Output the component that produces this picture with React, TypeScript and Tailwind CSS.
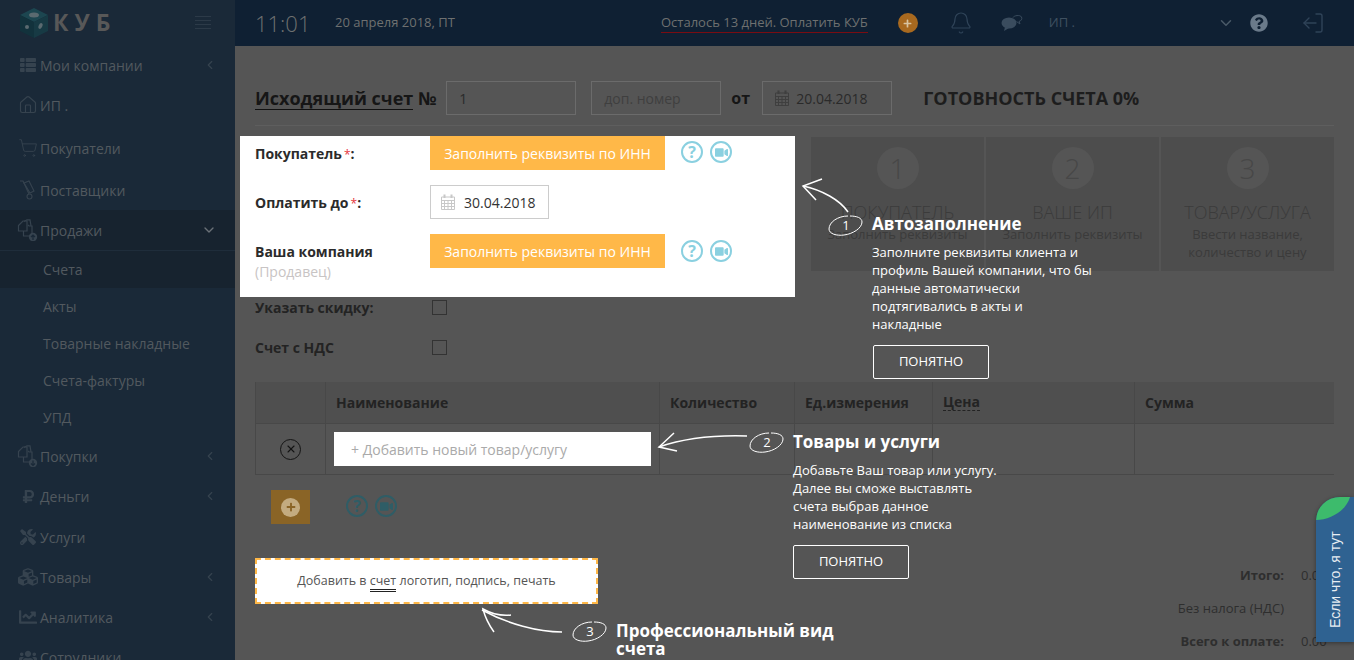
import React from 'react';
import { Bell, ChevronDown, ChevronLeft, Home, LogOut, ShoppingCart, X } from 'lucide-react';
import { FaChartLine, FaCubes, FaThList, FaQuestionCircle, FaRubleSign, FaTools, FaUsers, FaVideo, FaPlus } from 'react-icons/fa';

function DocsIcon({ up }: { up: boolean }) {
  return (
    <svg width="22" height="22" viewBox="0 0 22 22" fill="none" stroke="currentColor" strokeWidth="1.2">
      <path d="M1.5 6.5 6 2h4v10H1.5z" />
      <path d="M6.5 12v5H15V7h-3l-1-1" />
      <path d="M7 2.5 10 0.8h3l1 6" />
      <circle cx="16" cy="18" r="4.2" fill="currentColor" stroke="none" />
      <path d={up ? 'M16 21v-5M14 18l2-2 2 2' : 'M16 15.5v5M14 18.500l2 2 2-2'} stroke="#1a2938" strokeWidth="1.2" />
    </svg>
  );
}

function DollyIcon() {
  return (
    <svg width="18" height="20" viewBox="0 0 18 20" fill="none" stroke="currentColor" strokeWidth="1.1">
      <path d="M1 1h3l6 13" />
      <path d="M5 3l5-2 5 10-4 2z" />
      <circle cx="10.500" cy="16.500" r="2.500" />
    </svg>
  );
}

function CalendarIcon({ color }: { color: string }) {
  return (
    <svg width="14" height="16" viewBox="0 0 14 16" fill="none" stroke={color} strokeWidth="1" className="shrink-0">
      <path d="M0.5 3h13v12.500h-13zM0.500 6.500h13M0.500 9.500h13M0.500 12.500h13M3.500 6.500v9M7 6.500v9M10.500 6.500v9" />
      <path d="M3.500 0.500v3.500M10.500 0.500v3.500" strokeWidth="2" />
    </svg>
  );
}

function SideItem({ icon, label, arrow, active, down }: { icon: React.ReactNode; label: string; arrow?: boolean; active?: boolean; down?: boolean }) {
  return (
    <div className={`flex h-[40px] items-center pl-[16px] pr-[18px] ${active ? 'bg-[#17232f]' : ''}`}>
      <span className="flex w-[24px] shrink-0 justify-center text-[#36434f]">{icon}</span>
      <span className="flex-1 text-[14px] text-[#52595f]">{label}</span>
      {arrow && <ChevronLeft size={14} className="text-[#36434f]" />}
      {down && <ChevronDown size={16} className="text-[#6a7178]" />}
    </div>
  );
}

function SubItem({ label, active }: { label: string; active?: boolean }) {
  return (
    <div className={`flex h-[37px] items-center pl-[43px] text-[14px] text-[#52595f] ${active ? 'bg-[#17232f]' : ''}`}>{label}</div>
  );
}

function Sidebar() {
  return (
    <aside className="h-[660px] w-[235px] shrink-0 overflow-hidden bg-[#1a2938]">
      <div className="flex h-[45px] items-center pl-[20px] pr-[24px]">
        <svg width="28" height="30" viewBox="0 0 28 30">
          <path d="M14 0 28 7 14 14 0 7z" fill="#1c4650" />
          <path d="M0 7 14 14V30L0 23z" fill="#12323c" />
          <path d="M28 7 14 14V30L28 23z" fill="#173a44" />
          <ellipse cx="14" cy="7" rx="5" ry="2.500" fill="#5a6a70" />
          <circle cx="7" cy="19" r="2" fill="#5a6a70" />
          <ellipse cx="20.500" cy="18" rx="1.800" ry="3" fill="#5a6a70" transform="rotate(25 20.500 18)" />
        </svg>
        <span className="ml-[5px] flex-1 text-[23px] font-bold tracking-[6px] text-[#585858]">КУБ</span>
        <div className="flex w-[16px] flex-col gap-[3px]">
          <span className="h-px bg-[#2c3a48]" />
          <span className="h-px bg-[#2c3a48]" />
          <span className="h-px bg-[#2c3a48]" />
          <span className="h-px bg-[#2c3a48]" />
        </div>
      </div>
      <SideItem icon={<FaThList size={16} />} label="Мои компании" arrow />
      <SideItem icon={<Home size={20} strokeWidth={1.4} />} label="ИП ." />
      <div className="h-[3px]" />
      <SideItem icon={<ShoppingCart size={20} strokeWidth={1.1} />} label="Покупатели" />
      <div className="h-[2px]" />
      <SideItem icon={<DollyIcon />} label="Поставщики" />
      <SideItem icon={<DocsIcon up />} label="Продажи" active down />
      <div className="h-px bg-[#1f2d3b]" />
      <SubItem label="Счета" active />
      <SubItem label="Акты" />
      <SubItem label="Товарные накладные" />
      <SubItem label="Счета-фактуры" />
      <SubItem label="УПД" />
      <SideItem icon={<DocsIcon up={false} />} label="Покупки" arrow />
      <SideItem icon={<FaRubleSign size={15} />} label="Деньги" arrow />
      <div className="h-px" />
      <SideItem icon={<FaTools size={16} />} label="Услуги" />
      <SideItem icon={<FaCubes size={20} />} label="Товары" arrow />
      <SideItem icon={<FaChartLine size={18} />} label="Аналитика" arrow />
      <SideItem icon={<FaUsers size={18} />} label="Сотрудники" />
    </aside>
  );
}

function TopBar() {
  return (
    <header className="flex h-[46px] items-center bg-[#0f2033] pl-[20px] text-[#6e7070]">
      <span className="w-[80px] text-[22px] font-light">11:01</span>
      <span className="w-[326px] text-[13px]">20 апреля 2018, ПТ</span>
      <span className="border-b border-[#7a0c12] pb-[1px] text-[13px] leading-[17px]">Осталось 13 дней. Оплатить КУБ</span>
      <span className="ml-[30px] flex h-[20px] w-[20px] items-center justify-center rounded-full bg-[#a8691f] text-[#d8c3a0]">
        <FaPlus size={9} />
      </span>
      <Bell size={24} strokeWidth={1.2} className="ml-[31px] text-[#2f4358]" />
      <svg width="24" height="20" viewBox="0 0 24 20" className="ml-[27px]" fill="none">
        <ellipse cx="9" cy="10" rx="7.500" ry="5.500" fill="#3a4c5e" />
        <path d="M5 14l-1 4 5-3z" fill="#3a4c5e" />
        <path d="M13 4.500c1-2 7-3 8.500-.5 1 2-.5 4-2.500 4.500l1 2.500-3.500-2.500" stroke="#3a4c5e" />
      </svg>
      <span className="ml-[25px] w-[168px] text-[13px] text-[#3f5060]">ИП .</span>
      <ChevronDown size={18} className="text-[#4a5a68]" />
      <FaQuestionCircle size={18} className="ml-[15px] text-[#6a7a8a]" />
      <LogOut size={24} strokeWidth={1.4} className="ml-[33px] -scale-x-100 text-[#2f4358]" />
    </header>
  );
}

function DimInput({ value, width, muted, calendar }: { value: string; width: string; muted?: boolean; calendar?: boolean }) {
  return (
    <div className={`flex h-[34px] items-center gap-[7px] border border-[#6b6b6b] pl-[12px] text-[14px] ${width} ${muted ? 'text-[#3f3f3f]' : 'text-[#2a2a2a]'}`}>
      {calendar && <CalendarIcon color="#3f3f3f" />}
      {value}
    </div>
  );
}

function HelpIcons({ dim }: { dim?: boolean }) {
  const color = dim ? 'text-[#2f5d66] border-[#2f5d66]' : 'text-[#8ad0e0] border-[#8ad0e0]';
  return (
    <div className={`flex gap-[7px] ${dim ? '' : 'mb-[2px]'}`}>
      <span className={`flex h-[22px] w-[22px] items-center justify-center rounded-full border-2 text-[16px] font-bold ${color}`}>?</span>
      <span className={`flex h-[22px] w-[22px] items-center justify-center rounded-full border-2 ${color}`}>
        <FaVideo size={13} />
      </span>
    </div>
  );
}

function FillButton() {
  return (
    <div className="flex h-[34px] w-[235px] items-center justify-center bg-[#ffb848] text-[14px] text-white">Заполнить реквизиты по ИНН</div>
  );
}

function Required({ label }: { label: string }) {
  return (
    <span className="text-[14px] font-bold text-[#2b2b2b]">
      {label}
      <span className="ml-[2px] text-[12px] font-normal text-[#e5343c]">*</span>:
    </span>
  );
}

function HighlightedFields() {
  return (
    <div className="h-[161px] w-[555px] shrink-0 bg-white pl-[15px]">
      <div className="flex h-[34px] items-center">
        <span className="w-[175px]"><Required label="Покупатель" /></span>
        <FillButton />
        <span className="ml-[16px]"><HelpIcons /></span>
      </div>
      <div className="mt-[15px] flex h-[34px] items-center">
        <span className="w-[175px]"><Required label="Оплатить до" /></span>
        <div className="flex h-[34px] w-[119px] items-center gap-[9px] border border-[#cccccc] pl-[10px] text-[14px] text-[#333]">
          <CalendarIcon color="#c8c8c8" />
          30.04.2018
        </div>
      </div>
      <div className="mt-[15px] flex items-start">
        <div className="w-[175px] pt-[8px]">
          <div className="text-[14px] font-bold leading-[20px] text-[#2b2b2b]">Ваша компания</div>
          <div className="text-[14px] leading-[20px] text-[#c8c4c4]">(Продавец)</div>
        </div>
        <FillButton />
        <span className="ml-[16px] mt-[6px]"><HelpIcons /></span>
      </div>
    </div>
  );
}

function StepCard({ n, title, lines }: { n: string; title: string; lines: string[] }) {
  return (
    <div className="flex h-[134px] w-[173px] flex-col items-center bg-[#4d4d4d] pt-[10px] text-[#3b3b3b]">
      <div className="flex h-[42px] w-[42px] items-center justify-center rounded-full bg-[#555555] text-[28px] font-light text-[#474747]">{n}</div>
      <div className="mt-[10px] text-[18px] font-light leading-[26px]">{title}</div>
      {lines.map((l) => (
        <div key={l} className="text-[13px] leading-[18px]">{l}</div>
      ))}
    </div>
  );
}

function CheckRow({ label }: { label: string }) {
  return (
    <div className="flex h-[15px] items-center">
      <span className="w-[177px] text-[14px] font-bold text-[#232323]">{label}</span>
      <span className="h-[15px] w-[15px] border border-[#333333]" />
    </div>
  );
}

function ItemsTable() {
  const head = 'flex items-center border-l border-[#484848] pl-[10px] text-[14px] font-bold text-[#232323]';
  return (
    <div className="mt-[27px] grid grid-cols-[70px_334px_135px_138px_202px_200px] grid-rows-[41px_51px] border-b border-[#484848]">
      <div className="border-l border-[#484848] bg-[#4f4f4f]" />
      <div className={`${head} bg-[#4f4f4f]`}>Наименование</div>
      <div className={`${head} bg-[#4f4f4f]`}>Количество</div>
      <div className={`${head} bg-[#4f4f4f]`}>Ед.измерения</div>
      <div className={`${head} bg-[#4f4f4f]`}>
        <span className="border-b border-dashed border-[#232323] leading-[16px]">Цена</span>
      </div>
      <div className={`${head} bg-[#4f4f4f]`}>Сумма</div>
      <div className="flex items-center justify-center border-l border-t border-[#484848]">
        <span className="flex h-[21px] w-[21px] items-center justify-center rounded-full border-[1.5px] border-[#141414] text-[#141414]"><X size={12} strokeWidth={2.2} /></span>
      </div>
      <div className="flex items-center border-l border-t border-[#484848] pl-[8px]">
        <div className="flex h-[34px] w-[317px] items-center bg-white pl-[17px] text-[14px] text-[#aaaaaa]">+ Добавить новый товар/услугу</div>
      </div>
      <div className="border-l border-t border-[#484848]" />
      <div className="border-l border-t border-[#484848]" />
      <div className="border-l border-t border-[#484848]" />
      <div className="border-l border-t border-[#484848]" />
    </div>
  );
}

function Totals() {
  const row = 'flex h-[33px] items-center';
  const label = 'flex w-[100px] justify-end whitespace-nowrap';
  return (
    <div className="mt-[1px] w-[150px] shrink-0 text-[13px] text-[#2e2e2e]">
      <div className={row}><span className={`${label} font-bold`}>Итого:</span><span className="ml-[17px]">0.00</span></div>
      <div className={row}><span className={label}>Без налога (НДС)</span></div>
      <div className={row}><span className={`${label} font-bold`}>Всего к оплате:</span><span className="ml-[17px]">0.00</span></div>
    </div>
  );
}

function Scribble({ n }: { n: string }) {
  return (
    <div className="relative flex h-[24px] w-[36px] items-center justify-center text-[13px] text-white">
      <svg width="36" height="24" viewBox="0 0 36 24" fill="none" stroke="#ffffff" strokeWidth="1" className="absolute inset-0">
        <path d="M20 2C10 2 1 8 1 15c0 5 8 7 15 6 9-1 18-7 18-13 0-4-5-6-12-6" />
      </svg>
      <span className="relative">{n}</span>
    </div>
  );
}

function GotItButton() {
  return (
    <div className="flex h-[34px] w-[116px] items-center justify-center rounded-[2px] border border-white text-[13px] text-white">ПОНЯТНО</div>
  );
}

function Hint({ title, lines, className, buttonClass }: { title: string; lines: string[]; className: string; buttonClass: string }) {
  return (
    <div className={`absolute ${className}`}>
      <div className="text-[17px] font-bold leading-[20px] text-white">{title}</div>
      <div className="mt-[9px] text-[13px] leading-[18px] whitespace-nowrap text-white">
        {lines.map((l) => (
          <div key={l}>{l}</div>
        ))}
      </div>
      <div className={buttonClass}><GotItButton /></div>
    </div>
  );
}

function Hints() {
  return (
    <>
      <svg width="60" height="40" viewBox="0 0 60 40" fill="none" stroke="#ffffff" strokeWidth="1.5" className="absolute left-[798px] top-[178px]">
        <path d="M50 34C42 22 24 12 5 8" />
        <path d="M24 1 5 8l13 14" />
      </svg>
      <div className="absolute left-[828px] top-[214px]"><Scribble n="1" /></div>
      <Hint
        className="left-[872px] top-[214px]"
        buttonClass="ml-[1px] mt-[12px]"
        title="Автозаполнение"
        lines={['Заполните реквизиты клиента и', 'профиль Вашей компании, что бы', 'данные автоматически', 'подтягивались в акты и', 'накладные']}
      />

      <svg width="96" height="26" viewBox="0 0 96 26" fill="none" stroke="#ffffff" strokeWidth="1.5" className="absolute left-[655px] top-[430px]">
        <path d="M92 6C60 5 30 8 4 17" />
        <path d="M19 3 4 17l18 4" />
      </svg>
      <div className="absolute left-[749px] top-[431px]"><Scribble n="2" /></div>
      <Hint
        className="left-[793px] top-[432px]"
        buttonClass="mt-[12px]"
        title="Товары и услуги"
        lines={['Добавьте Ваш товар или услугу.', 'Далее вы сможе выставлять', 'счета выбрав данное', 'наименование из списка']}
      />

      <svg width="88" height="34" viewBox="0 0 88 34" fill="none" stroke="#ffffff" strokeWidth="1.5" className="absolute left-[478px] top-[604px]">
        <path d="M84 28C60 28 30 20 4 6" />
        <path d="M33 11C24 12 14 10 5 5c2 8 6 16 11 23" />
      </svg>
      <div className="absolute left-[572px] top-[620px]"><Scribble n="3" /></div>
      <div className="absolute left-[616px] top-[622px] w-[240px] text-[17px] font-bold leading-[18px] text-white">Профессиональный вид счета</div>
    </>
  );
}

function HelpWidget() {
  return (
    <div className="absolute right-0 top-[497px] h-[145px] w-[38px] overflow-hidden rounded-tl-[24px] bg-[#2f6291] shadow-[0_1px_4px_rgba(0,0,0,0.4)]">
      <svg width="38" height="24" viewBox="0 0 38 24" className="absolute left-0 top-0">
        <path d="M0 23C14 23 30 14 34 0H20C8 0 0 10 0 23z" fill="#3dbb6c" />
      </svg>
      <div className="absolute bottom-[14px] left-[10px] origin-bottom-left translate-x-[18px] -rotate-90 whitespace-nowrap font-['Liberation_Sans'] text-[14px] leading-[18px] text-[#e9eef3]">Если что, я тут</div>
    </div>
  );
}

export default function App() {
  return (
    <div className="relative flex h-[660px] w-[1354px] overflow-hidden bg-[#555555] font-['Open_Sans',sans-serif]">
      <Sidebar />
      <main className="min-w-0 flex-1">
        <TopBar />
        <div className="mt-[35px] flex h-[34px] items-center pl-[20px]">
          <span className="border-b border-[#111] text-[18px] font-bold leading-[22px] text-[#161616]">Исходящий счет</span>
          <span className="ml-[5px] w-[28px] text-[18px] font-bold text-[#161616]">№</span>
          <DimInput value="1" width="w-[130px]" />
          <span className="ml-[15px]"><DimInput value="доп. номер" width="w-[130px]" muted /></span>
          <span className="ml-[10px] w-[31px] text-[16px] font-bold text-[#161616]">от</span>
          <DimInput value="20.04.2018" width="w-[130px]" calendar />
          <span className="ml-[31px] text-[18px] font-bold text-[#1d1d1d]">ГОТОВНОСТЬ СЧЕТА 0%</span>
        </div>
        <div className="ml-[20px] mr-[20px] mt-[10px] border-b border-[#5e5e5e]" />
        <div className="mt-[10px] flex items-start pl-[5px]">
          <HighlightedFields />
          <div className="ml-[16px] mt-[1px] flex gap-[2px]">
            <StepCard n="1" title="ПОКУПАТЕЛЬ" lines={['Заполнить реквизиты']} />
            <StepCard n="2" title="ВАШЕ ИП" lines={['Заполнить реквизиты']} />
            <StepCard n="3" title="ТОВАР/УСЛУГА" lines={['Ввести название,', 'количество и цену']} />
          </div>
        </div>
        <div className="pl-[20px] pr-[20px]">
          <div className="mt-[3px]"><CheckRow label="Указать скидку:" /></div>
          <div className="mt-[25px]"><CheckRow label="Счет с НДС" /></div>
          <ItemsTable />
          <div className="mt-[15px] flex items-center">
            <div className="ml-[16px] flex h-[34px] w-[39px] items-center justify-center bg-[#8a6426]">
              <span className="flex h-[19px] w-[19px] items-center justify-center rounded-full bg-[#c3ab80] text-[#8a6426]"><FaPlus size={10} /></span>
            </div>
            <span className="ml-[36px] -mt-[2px]"><HelpIcons dim /></span>
          </div>
          <div className="mt-[34px] flex justify-between">
            <div className="flex h-[46px] w-[343px] items-center justify-center border-2 border-dashed border-[#ffb848] bg-white text-[12.5px] text-[#555]">
              <span>Добавить в <span className="border-b-[3px] border-double border-[#222]">счет</span> логотип, подпись, печать</span>
            </div>
            <Totals />
          </div>
        </div>
      </main>
      <Hints />
      <HelpWidget />
    </div>
  );
}
